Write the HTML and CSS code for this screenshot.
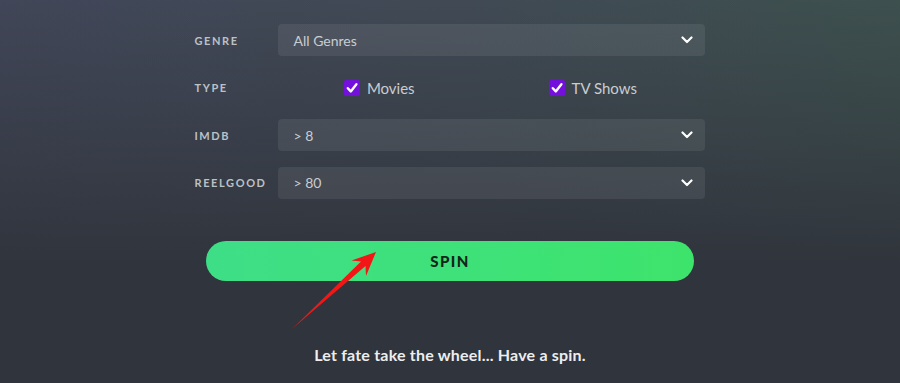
FILE: index.html
```html
<!DOCTYPE html>
<html>
<head>
<meta charset="utf-8">
<link rel="stylesheet" href="styles.css">
</head>
<body>
<div class="page">
  <div class="form">
    <div class="label">Genre</div>
    <div class="select"><span>All Genres</span><svg class="chev" viewBox="0 0 12 8" width="12" height="8"><path d="M1.5 1.5 L6 6 L10.5 1.5" fill="none" stroke="#fff" stroke-width="2.2" stroke-linecap="round" stroke-linejoin="round"/></svg></div>

    <div class="label">Type</div>
    <div class="types">
      <label class="check"><span class="box"><svg viewBox="0 0 16 16" width="16" height="16"><path d="M3.8 8.2 L6.8 11.4 L12.4 4.2" fill="none" stroke="#fff" stroke-width="2.4" stroke-linecap="round" stroke-linejoin="round"/></svg></span>Movies</label>
      <label class="check"><span class="box"><svg viewBox="0 0 16 16" width="16" height="16"><path d="M3.8 8.2 L6.8 11.4 L12.4 4.2" fill="none" stroke="#fff" stroke-width="2.4" stroke-linecap="round" stroke-linejoin="round"/></svg></span>TV Shows</label>
    </div>

    <div class="label">IMDB</div>
    <div class="select"><span>&gt; 8</span><svg class="chev" viewBox="0 0 12 8" width="12" height="8"><path d="M1.5 1.5 L6 6 L10.5 1.5" fill="none" stroke="#fff" stroke-width="2.2" stroke-linecap="round" stroke-linejoin="round"/></svg></div>

    <div class="label">Reelgood</div>
    <div class="select"><span>&gt; 80</span><svg class="chev" viewBox="0 0 12 8" width="12" height="8"><path d="M1.5 1.5 L6 6 L10.5 1.5" fill="none" stroke="#fff" stroke-width="2.2" stroke-linecap="round" stroke-linejoin="round"/></svg></div>
  </div>

  <button class="spin">SPIN</button>

  <p class="tagline">Let fate take the wheel... Have a spin.</p>

  <svg class="arrow" viewBox="0 0 900 383" width="900" height="383">
    <polygon points="292,329 361,261.5 351.5,260.5 376,252 366,276 365.5,266" fill="#f21616"/>
  </svg>
</div>
</body>
</html>
```

FILE: styles.css
```css
html, body {
  margin: 0;
  padding: 0;
}
body {
  width: 900px;
  height: 383px;
  overflow: hidden;
  font-family: Lato, "Open Sans", sans-serif;
}
.page {
  position: relative;
  width: 900px;
  height: 383px;
  box-sizing: border-box;
  padding-top: 24px;
  display: flex;
  flex-direction: column;
  align-items: center;
  background:
    linear-gradient(to bottom, rgba(48,52,60,0) 0%, rgba(48,52,60,0.5) 38%, #30343c 70%, #30343c 100%),
    linear-gradient(to right, #414658 0%, #404a54 55%, #3d504e 100%);
}
.form {
  width: 510px;
  margin-left: -1px;
  display: grid;
  grid-template-columns: 83px 1fr;
  row-gap: 15.5px;
  align-items: center;
}
.label {
  font-size: 11px;
  font-weight: 700;
  letter-spacing: 1.6px;
  text-transform: uppercase;
  color: #bcc1c6;
}
.select {
  height: 32px;
  box-sizing: border-box;
  border-radius: 4px;
  background: rgba(255,255,255,0.075);
  display: flex;
  align-items: center;
  justify-content: space-between;
  padding: 0 12px 0 16px;
  font-size: 14px;
  color: #c9cdd1;
}
.chev {
  display: block;
}
.types {
  height: 32px;
  display: grid;
  grid-template-columns: 1fr 1fr;
  align-items: center;
}
.check {
  display: flex;
  align-items: center;
  justify-self: center;
  gap: 7px;
  font-size: 15px;
  color: #c9cdd1;
}
.types .check:first-child {
  margin-right: 10px;
}
.types .check:last-child {
  margin-right: 10px;
}
.box {
  width: 16px;
  height: 16px;
  border-radius: 2px;
  background: #7410db;
  display: block;
}
.box svg {
  display: block;
}
.spin {
  margin-top: 42px;
  width: 488px;
  height: 40px;
  border: none;
  border-radius: 20px;
  background: linear-gradient(to right, #3ede88 0%, #3ee17a 50%, #3de46b 100%);
  font-family: Lato, "Open Sans", sans-serif;
  font-size: 15px;
  font-weight: 900;
  letter-spacing: 1.4px;
  color: #13261a;
  padding: 0;
}
.tagline {
  margin: 64px 0 0 0;
  font-size: 16px;
  font-weight: 700;
  color: #eceef0;
  letter-spacing: 0.2px;
}
.arrow {
  position: absolute;
  left: 0;
  top: 0;
  pointer-events: none;
}
```
